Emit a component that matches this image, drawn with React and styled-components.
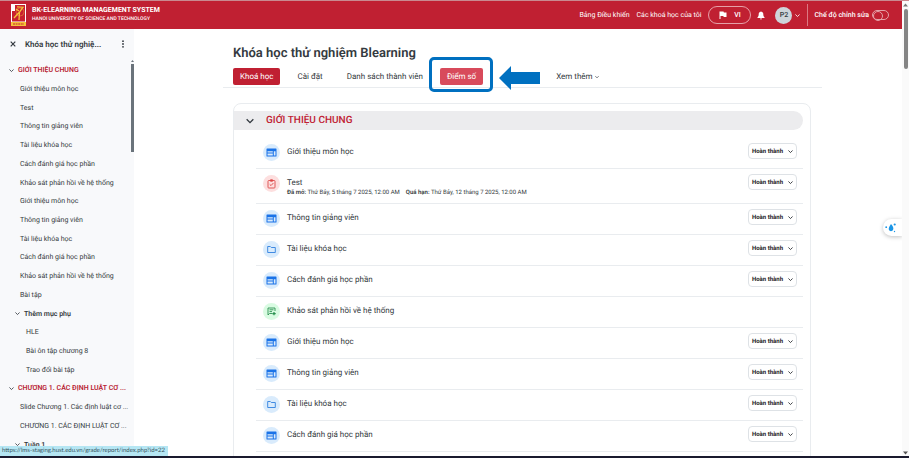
import React, { useState } from "react";
import styled, { createGlobalStyle } from "styled-components";

const sidebarItems = [
  { kind: "section", text: "GIỚI THIỆU CHUNG" },
  { text: "Giới thiệu môn học" },
  { text: "Test" },
  { text: "Thông tin giảng viên" },
  { text: "Tài liệu khóa học" },
  { text: "Cách đánh giá học phần" },
  { text: "Khảo sát phản hồi về hệ thống" },
  { text: "Giới thiệu môn học" },
  { text: "Thông tin giảng viên" },
  { text: "Tài liệu khóa học" },
  { text: "Cách đánh giá học phần" },
  { text: "Khảo sát phản hồi về hệ thống" },
  { text: "Bài tập" },
  { kind: "sub", text: "Thêm mục phụ" },
  { kind: "nested", text: "HLE" },
  { kind: "nested", text: "Bài ôn tập chương 8" },
  { kind: "nested", text: "Trao đổi bài tập" },
  { kind: "section", text: "CHƯƠNG 1. CÁC ĐỊNH LUẬT CƠ ..." },
  { text: "Slide Chương 1. Các định luật cơ ..." },
  { text: "CHƯƠNG 1. CÁC ĐỊNH LUẬT CƠ ..." },
  { kind: "sub", text: "Tuần 1" }
];

const activities = [
  { icon: "page", name: "Giới thiệu môn học", done: true },
  {
    icon: "assign",
    name: "Test",
    done: true,
    opened: "Thứ Bảy, 5 tháng 7 2025, 12:00 AM",
    due: "Thứ Bảy, 12 tháng 7 2025, 12:00 AM"
  },
  { icon: "page", name: "Thông tin giảng viên", done: true },
  { icon: "folder", name: "Tài liệu khóa học", done: true },
  { icon: "page", name: "Cách đánh giá học phần", done: true },
  { icon: "survey", name: "Khảo sát phản hồi về hệ thống", done: false },
  { icon: "page", name: "Giới thiệu môn học", done: true },
  { icon: "page", name: "Thông tin giảng viên", done: true },
  { icon: "folder", name: "Tài liệu khóa học", done: true },
  { icon: "page", name: "Cách đánh giá học phần", done: true }
];

const iconColors = {
  page: { bg: "#d9ebfc", fg: "#1a73e8" },
  folder: { bg: "#d9ebfc", fg: "#2f80e0" },
  assign: { bg: "#fddfdf", fg: "#dc4a4a" },
  survey: { bg: "#d9fbe2", fg: "#2a9150" }
};

const Chevron = ({ size = 6 }) => (
  <svg width={size} height={size} viewBox="0 0 12 12" fill="none" stroke="currentColor" strokeWidth="2" aria-hidden="true">
    <path d="M1 3.5l5 5 5-5" />
  </svg>
);

const ActivityIcon = ({ kind }) => {
  if(kind === "page") {
    return (<svg width="11" height="9" viewBox="0 0 11 9" aria-hidden="true">
      <path fill="currentColor" fillRule="evenodd" d="M1 .5h9q.5 0 .5.5v7q0 .5-.5.5H1q-.5 0-.5-.5V1Q.5.5 1 .5zM1.500 3.200v1.300h5.300V3.200zM1.500 5.500v2h5.300v-2zM7.800 3.200v4.300h1.700V3.200z" />
    </svg>);
  }
  if(kind === "folder") {
    return (<svg width="9" height="9" viewBox="0 0 9 9" fill="none" stroke="currentColor" strokeWidth="0.9" aria-hidden="true">
      <path d="M.7 1.500h2.600l1 1h4v5H.7z" strokeLinejoin="round" />
    </svg>);
  }
  if(kind === "assign") {
    return (<svg width="9" height="10" viewBox="0 0 9 10" fill="none" stroke="currentColor" strokeWidth="0.9" aria-hidden="true">
      <rect x="1" y="1.500" width="7" height="7.500" rx="0.8" />
      <path d="M2.700 5.300l1.300 1.300 2.400-2.600" />
      <path d="M3.500.8h2v1.400h-2z" fill="currentColor" />
    </svg>);
  }
  return (<svg width="9" height="9" viewBox="0 0 9 9" fill="none" stroke="currentColor" strokeWidth="0.9" aria-hidden="true">
    <path d="M8 4V1H1v7l1.500-1.500H5M2.500 2.800h4M2.500 4.600h2.500" />
    <path d="M5.300 6.600h3.400M7 4.900v3.400" strokeWidth="1.200" />
  </svg>);
};

const Logo = () => (
  <svg width="15" height="22" viewBox="0 0 15 22" aria-hidden="true">
    <path fill="#fff" d="M0 0h15v18H0z" />
    <path fill="#c8202f" d="M1 1h13v16.500H1z" />
    <path fill="#fff" d="M1 1h3v6H1z" />
    <circle cx="9" cy="8" r="4" fill="none" stroke="#e58a35" strokeWidth="0.6" />
    <path d="M6 2.800l6 .4-3.500 5L8 16M3 14l5-5.500M5 5l3 2" fill="none" stroke="#f5c339" strokeWidth="1.300" />
    <path fill="#f5c339" d="M0 18h15v4H0z" />
    <path d="M2 20h11" stroke="#c8202f" strokeWidth="1" strokeDasharray="2 .6" />
  </svg>
);

const App = () => {
  const [editing, setEditing] = useState(false);
  return (<Page>
    <GlobalStyle />
    <Workspace>
      <Site>
        <Header>
          <Brand href="#">
            <Logo />
            <span>
              <BrandName>BK-ELEARNING MANAGEMENT SYSTEM</BrandName>
              <BrandSub>HANOI UNIVERSITY OF SCIENCE AND TECHNOLOGY</BrandSub>
            </span>
          </Brand>
          <HeaderLink href="#">Bảng Điều khiển</HeaderLink>
          <HeaderLink href="#">Các khoá học của tôi</HeaderLink>
          <Language>
            <svg width="8" height="8" viewBox="0 0 8 8" fill="currentColor" aria-hidden="true">
              <path d="M.5.500h4l.4 1H7.500v4.500H4.700l-.4-1H1.500v3h-1z" />
            </svg>
            VI
          </Language>
          <Bell aria-label="Thông báo">
            <svg width="8" height="9" viewBox="0 0 8 9" fill="currentColor" aria-hidden="true">
              <path d="M4 .500c1.600.3 2.300 1.500 2.300 2.800 0 1.500.4 2.200 1.200 3V7H.5v-.7c.8-.8 1.200-1.500 1.200-3C1.700 2 2.400.8 4 .500zM3 7.500h2a1 1 0 0 1-2 0z" />
            </svg>
          </Bell>
          <User aria-label="Tài khoản">
            <Avatar>P2</Avatar>
            <Chevron size={5} />
          </User>
          <EditMode>
            Chế độ chỉnh sửa
            <Switch type="checkbox" checked={editing} onChange={() => setEditing(!editing)} />
          </EditMode>
        </Header>
        <Body>
          <Sidebar>
            <SidebarTop>
              <IconButton aria-label="Đóng">
                <svg width="6" height="6" viewBox="0 0 6 6" stroke="currentColor" strokeWidth="1.200" aria-hidden="true">
                  <path d="M.7.700l4.600 4.600M5.300.700L.7 5.300" />
                </svg>
              </IconButton>
              <SidebarTitle>Khóa học thử nghiệ...</SidebarTitle>
              <IconButton aria-label="Tùy chọn">
                <svg width="4" height="8" viewBox="0 0 4 8" fill="currentColor" aria-hidden="true">
                  <circle cx="2" cy="1.200" r="0.900" /><circle cx="2" cy="4" r="0.900" /><circle cx="2" cy="6.800" r="0.900" />
                </svg>
              </IconButton>
            </SidebarTop>
            <Index>
              {sidebarItems.map((item, i) => (
                <IndexRow key={i} $kind={item.kind}>
                  {(item.kind === "section" || item.kind === "sub") && <Chevron size={5} />}
                  <IndexLink href="#" $kind={item.kind}>{item.text}</IndexLink>
                </IndexRow>
              ))}
            </Index>
            <SidebarScroll>
              <svg width="3" height="2" viewBox="0 0 3 2" fill="#6a737b" aria-hidden="true"><path d="M0 2L1.500 0 3 2z" /></svg>
              <SidebarThumb />
            </SidebarScroll>
          </Sidebar>
          <Main>
            <Title>Khóa học thử nghiệm Blearning</Title>
            <Tabs>
              <Tab href="#" $bg="#c02032">Khoá học</Tab>
              <Tab href="#">Cài đặt</Tab>
              <Tab href="#">Danh sách thành viên</Tab>
              <Marked>
                <Tab href="#" $bg="#d84a5b">Điểm số</Tab>
                <Highlight />
                <Arrow width="41" height="24" viewBox="0 0 41 24" aria-hidden="true">
                  <path fill="#0070c0" d="M0 12L12 0v6h29v12H12v6z" />
                </Arrow>
              </Marked>
              <Tab href="#">Xem thêm <Chevron size={4} /></Tab>
            </Tabs>
            <Card>
              <SectionBar>
                <Chevron size={8} />
                <h2>GIỚI THIỆU CHUNG</h2>
              </SectionBar>
              <ActivityList>
                {activities.map((a, i) => (
                  <Activity key={i}>
                    <Badge $kind={a.icon}><ActivityIcon kind={a.icon} /></Badge>
                    <Info>
                      <ActivityLink href="#">{a.name}</ActivityLink>
                      {a.opened && <Dates>
                        <span><b>Đã mở:</b> {a.opened}</span>
                        <span><b>Quá hạn:</b> {a.due}</span>
                      </Dates>}
                    </Info>
                    {a.done && <Done>Hoàn thành <Chevron size={5} /></Done>}
                  </Activity>
                ))}
              </ActivityList>
            </Card>
          </Main>
          <Assistant aria-label="Trợ lý">
            <svg width="12" height="12" viewBox="0 0 12 12" fill="#1b96e6" aria-hidden="true">
              <path d="M6 2q3 3.200 2.200 5.600a2.300 2.300 0 0 1-4.400 0Q3.300 5.500 6 2z" />
              <circle cx="9.700" cy="2.500" r="1.100" /><circle cx="1.200" cy="5.200" r="0.900" /><circle cx="9.500" cy="9.500" r="0.700" />
            </svg>
          </Assistant>
        </Body>
      </Site>
      <Scrollbar>
        <svg width="5" height="4" viewBox="0 0 5 4" fill="#777" aria-hidden="true"><path d="M0 3.500L2.500.500 5 3.500z" /></svg>
        <Thumb />
        <svg width="5" height="4" viewBox="0 0 5 4" fill="#555" aria-hidden="true"><path d="M0 .500L2.500 3.500 5 .500z" /></svg>
      </Scrollbar>
    </Workspace>
    <Status>https://lms-staging.hust.edu.vn/grade/report/index.php?id=22</Status>
  </Page>);
};

const GlobalStyle = createGlobalStyle`
  * {
    box-sizing: border-box;
  }
  body {
    color: #343a40;
    font-family: Roboto, "Liberation Sans", sans-serif;
    font-size: 7px;
    margin: 0;
    text-rendering: geometricPrecision;
  }
  a {
    color: inherit;
    text-decoration: none;
  }
  button {
    background: none;
    border: none;
    color: inherit;
    cursor: pointer;
    font: inherit;
    padding: 0;
    text-rendering: inherit;
  }
  svg {
    flex: none;
  }
`;
const Page = styled.div`
  background: #fff;
  border-bottom: solid 2px #1a1a2e;
  border-top: solid 1px #c98a90;
  height: 100vh;
  overflow: hidden;
  position: relative;
`;
const Workspace = styled.div`
  display: flex;
  height: 100%;
`;
const Site = styled.div`
  display: flex;
  flex: 1;
  flex-direction: column;
  min-width: 0;
`;
const Header = styled.header`
  align-items: center;
  background: #c02032;
  color: #fff;
  display: flex;
  flex: none;
  height: 28px;
  padding: 0 13px 0 11px;
`;
const Brand = styled.a`
  align-items: center;
  display: flex;
  gap: 6px;
  margin-right: auto;
`;
const BrandName = styled.strong`
  display: block;
  font-size: 7px;
  line-height: 9px;
`;
const BrandSub = styled.span`
  display: block;
  font-size: 5px;
  font-weight: 500;
  line-height: 9px;
`;
const HeaderLink = styled.a`
  margin-right: 7px;
`;
const Language = styled.button`
  align-items: center;
  border: solid 1px #e5a0a8;
  border-radius: 9px;
  display: flex;
  font-weight: 500;
  gap: 7px;
  height: 18px;
  justify-content: center;
  width: 43px;
`;
const Bell = styled.button`
  display: flex;
  margin: 0 10px 0 6px;
`;
const User = styled.button`
  align-items: center;
  display: flex;
  gap: 3px;
`;
const Avatar = styled.span`
  background: #ced4da;
  border-radius: 50%;
  color: #343a40;
  font-weight: 500;
  height: 17px;
  line-height: 17px;
  width: 17px;
`;
const EditMode = styled.label`
  align-items: center;
  border-left: solid 1px #dc7883;
  display: flex;
  font-weight: 500;
  gap: 3px;
  height: 22px;
  margin-left: 7px;
  padding-left: 6px;
`;
const Switch = styled.input`
  appearance: none;
  border: solid 1px #e5a0a8;
  border-radius: 5px;
  height: 10px;
  margin: 0;
  position: relative;
  width: 17px;
  &::before {
    border: solid 1px #e5a0a8;
    border-radius: 50%;
    content: "";
    height: 8px;
    left: 0;
    position: absolute;
    top: 0;
    width: 8px;
  }
  &:checked::before {
    left: 7px;
  }
`;
const Body = styled.div`
  display: flex;
  flex: 1;
  min-height: 0;
  position: relative;
`;
const Sidebar = styled.aside`
  background: #f8f9fb;
  display: flex;
  flex: none;
  flex-direction: column;
  padding: 5px 9px 2px;
  position: relative;
  width: 134px;
`;
const SidebarTop = styled.div`
  align-items: center;
  display: flex;
  gap: 7px;
  height: 20px;
  margin-bottom: 7px;
  padding-left: 1px;
`;
const IconButton = styled.button`
  display: flex;
`;
const SidebarTitle = styled.h2`
  flex: 1;
  font-size: 8px;
  font-weight: 600;
  margin: 0 0 0 2px;
  white-space: nowrap;
`;
const Index = styled.ul`
  display: grid;
  flex: 1;
  grid-auto-rows: 1fr;
  list-style: none;
  margin: 0;
  padding: 0;
`;
const rowIndent = { section: "0", sub: "6px", nested: "17px" };
const IndexRow = styled.li`
  align-items: center;
  display: flex;
  gap: 4px;
  padding-left: ${p => rowIndent[p.$kind] || "11px"};
`;
const IndexLink = styled.a`
  color: ${p => (p.$kind === "section" ? "#b91d33" : "inherit")};
  font-weight: ${p => (p.$kind === "section" || p.$kind === "sub" ? 600 : 400)};
  white-space: nowrap;
`;
const SidebarScroll = styled.div`
  display: flex;
  flex-direction: column;
  gap: 2px;
  position: absolute;
  right: 0;
  top: 31px;
`;
const SidebarThumb = styled.div`
  background: #6a737b;
  height: 88px;
  width: 3px;
`;
const Main = styled.main`
  flex: 1;
  min-width: 0;
  padding: 16px 80px 0 89px;
`;
const Title = styled.h1`
  font-size: 13px;
  font-weight: 600;
  line-height: 18px;
  margin: 0 0 5px 10px;
`;
const Tabs = styled.nav`
  align-items: center;
  border-bottom: solid 1px #e9ecef;
  display: flex;
  gap: 10px;
  height: 20px;
  margin-bottom: 15px;
  padding: 0 0 2px 10px;
`;
const Tab = styled.a`
  background: ${p => p.$bg || "none"};
  border-radius: 2px;
  color: ${p => (p.$bg ? "#fff" : "inherit")};
  display: block;
  font-size: 8px;
  line-height: 17px;
  padding: 0 7px;
  white-space: nowrap;
`;
const Marked = styled.div`
  margin-right: 56px;
  position: relative;
`;
const Highlight = styled.span`
  border: solid 3px #0070c0;
  border-radius: 5px;
  inset: -11px -10px -7px -11px;
  pointer-events: none;
  position: absolute;
`;
const Arrow = styled.svg`
  left: calc(100% + 16px);
  position: absolute;
  top: -2px;
`;
const Card = styled.section`
  border: solid 1px #e9ecef;
  border-radius: 8px;
  margin: 0 11px 0 10px;
  padding: 7px 7px 20px 0;
`;
const SectionBar = styled.div`
  align-items: center;
  background: #ececee;
  border-radius: 0 10px 10px 0;
  display: flex;
  gap: 12px;
  height: 19px;
  padding-left: 12px;
  & > h2 {
    color: #c02032;
    font-size: 10px;
    font-weight: 500;
    margin: 0;
  }
`;
const ActivityList = styled.ul`
  list-style: none;
  margin: 8px 0 0 22px;
  padding: 0;
`;
const Activity = styled.li`
  border-bottom: solid 1px #e9ecef;
  display: flex;
  padding: 5px 6px 7px 7px;
`;
const Badge = styled.span`
  align-items: center;
  background: ${p => iconColors[p.$kind].bg};
  border-radius: 50%;
  color: ${p => iconColors[p.$kind].fg};
  display: flex;
  height: 17px;
  justify-content: center;
  margin: 1px 7px 0 0;
  width: 17px;
`;
const Info = styled.div`
  flex: 1;
  padding-top: 3px;
`;
const ActivityLink = styled.a`
  display: block;
  font-size: 8px;
  line-height: 12px;
`;
const Dates = styled.div`
  display: flex;
  font-size: 6px;
  gap: 6px;
  line-height: 7px;
  & b {
    font-weight: 600;
  }
`;
const Done = styled.button`
  align-items: center;
  border: solid 1px #dee2e6;
  border-radius: 4px;
  color: #1d2125;
  display: flex;
  font-size: 6px;
  font-weight: 700;
  height: 16px;
  justify-content: space-between;
  padding: 0 3px;
  width: 49px;
`;
const Assistant = styled.button`
  align-items: center;
  background: #fff;
  border-radius: 9px 0 0 9px;
  box-shadow: 0 1px 4px rgba(0, 0, 0, 0.25);
  clip-path: inset(-6px 0 -6px -6px);
  display: flex;
  height: 17px;
  padding-left: 2px;
  position: absolute;
  right: 0;
  top: 190px;
  width: 19px;
`;
const Scrollbar = styled.div`
  align-items: center;
  background: #fafafa;
  display: flex;
  flex: none;
  flex-direction: column;
  padding: 2px 0 1px;
  width: 7px;
  & > svg:last-child {
    margin-top: auto;
  }
`;
const Thumb = styled.div`
  background: #858585;
  border-radius: 2px;
  height: 60px;
  margin-top: 2px;
  width: 4px;
`;
const Status = styled.div`
  background: #b5e6f3;
  bottom: 0;
  color: #36535e;
  font-family: Lato, "Noto Sans", sans-serif;
  font-size: 6px;
  left: 0;
  line-height: 10px;
  padding: 0 3px 0 2px;
  position: absolute;
`;
export default App;
